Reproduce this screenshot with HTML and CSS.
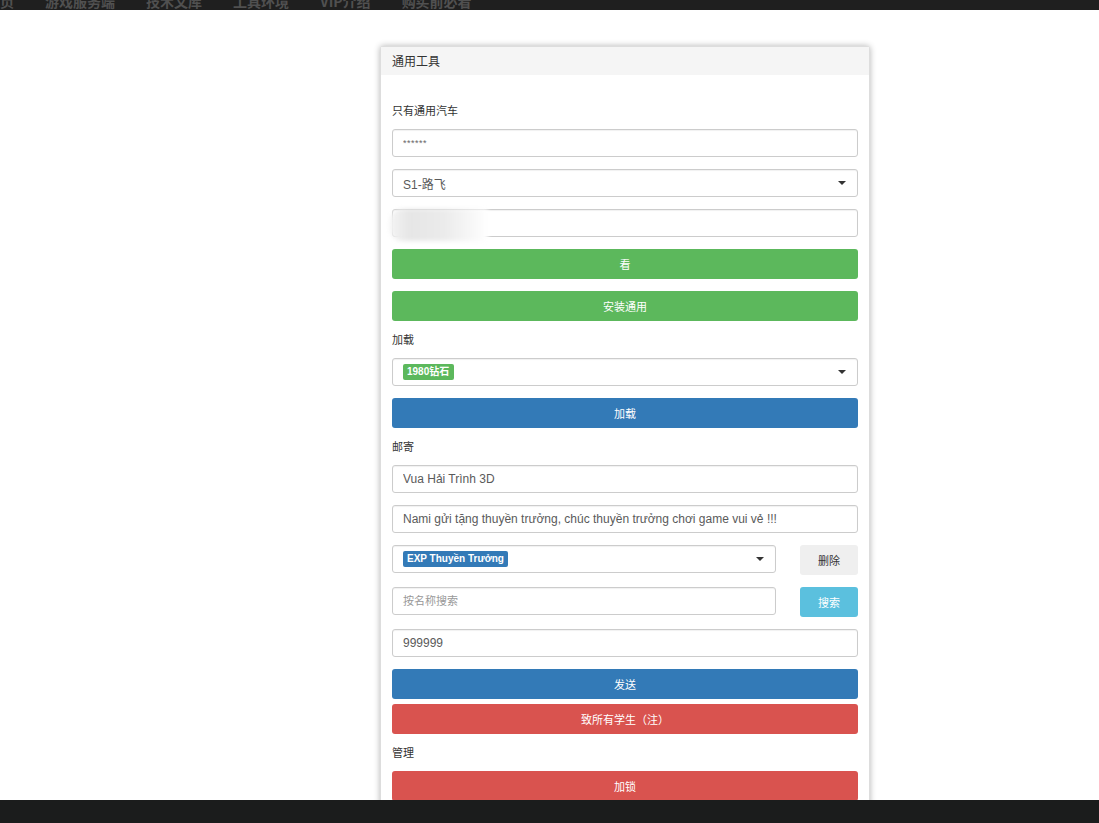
FILE: index.html
```html
<!DOCTYPE html>
<html lang="zh-CN">
<head>
    <meta charset="UTF-8">
    <meta name="viewport" content="width=device-width, initial-scale=1.0">
    <title>通用工具</title>
    <link rel="stylesheet" href="styles.css">
</head>
<body>
    <!-- Top nav (scrolled, only bottom edge visible) -->
    <div class="topbar">
        <ul class="nav">
            <li>首页</li>
            <li>游戏服务端</li>
            <li>技术文库</li>
            <li>工具环境</li>
            <li>VIP介绍</li>
            <li>购买前必看</li>
        </ul>
    </div>

    <div class="main">
        <div class="panel">
            <div class="panel-heading">通用工具</div>
            <div class="panel-body">
                <label class="field-label">只有通用汽车</label>
                <input type="text" class="form-control pw" value="******">
                <div class="form-control select-box">
                    <span>S1-路飞</span>
                    <span class="caret"></span>
                </div>
                <div class="form-control smudge-box">
                    <span class="smudge"></span>
                </div>
                <button class="btn btn-success">看</button>
                <button class="btn btn-success">安装通用</button>

                <label class="field-label">加载</label>
                <div class="form-control select-box">
                    <span class="tag tag-green">1980钻石</span>
                    <span class="caret"></span>
                </div>
                <button class="btn btn-primary">加载</button>

                <label class="field-label">邮寄</label>
                <input type="text" class="form-control" value="Vua Hải Trình 3D">
                <input type="text" class="form-control" value="Nami gửi tặng thuyền trưởng, chúc thuyền trưởng chơi game vui vẻ !!!">
                <div class="row">
                    <div class="form-control select-box">
                        <span class="tag tag-blue">EXP Thuyền Trưởng</span>
                        <span class="caret"></span>
                    </div>
                    <button class="btn btn-default btn-side">删除</button>
                </div>
                <div class="row">
                    <input type="text" class="form-control" placeholder="按名称搜索">
                    <button class="btn btn-info btn-side">搜索</button>
                </div>
                <input type="text" class="form-control" value="999999">
                <button class="btn btn-primary">发送</button>
                <button class="btn btn-danger btn-tight">致所有学生（注）</button>

                <label class="field-label">管理</label>
                <button class="btn btn-danger">加锁</button>
            </div>
        </div>
    </div>

    <div class="footer"></div>
</body>
</html>
```

FILE: styles.css
```css
* {
    box-sizing: border-box;
}

body {
    margin: 0;
    height: 100vh;
    display: flex;
    flex-direction: column;
    overflow: hidden;
    background: #fff;
    font-family: "Liberation Sans", "Noto Sans CJK SC", sans-serif;
    font-size: 12px;
    color: #333;
}

/* Top nav */
.topbar {
    height: 10px;
    flex: 0 0 10px;
    background: #1f1f1f;
    overflow: hidden;
}

.nav {
    list-style: none;
    margin: -9px 0 0 0;
    padding: 0;
    display: flex;
    gap: 31px;
    font-family: "Noto Sans CJK SC", sans-serif;
    font-size: 14px;
    font-weight: bold;
    line-height: 20px;
    color: #505050;
}

.nav li:first-child {
    margin-left: -14px;
}

/* Content */
.main {
    flex: 1;
    overflow: hidden;
    padding: 36px 0 0 380px;
}

.panel {
    width: 490px;
    border: 1px solid #ddd;
    border-radius: 3px;
    background: #fff;
    box-shadow: 0 0 6px rgba(0, 0, 0, 0.3);
}

.panel-heading {
    height: 28px;
    line-height: 28px;
    padding: 0 11px;
    background: #f5f5f5;
    font-family: "Noto Sans CJK SC", sans-serif;
    font-size: 12px;
    color: #333;
}

.panel-body {
    padding: 29px 11px 12px;
    display: flex;
    flex-direction: column;
    gap: 12px;
}

.field-label {
    display: block;
    margin-top: -1px;
    line-height: 14px;
    font-family: "Noto Sans CJK SC", sans-serif;
    font-size: 11px;
    color: #333;
}

.form-control {
    display: flex;
    align-items: center;
    width: 100%;
    height: 28px;
    padding: 0 10px;
    border: 1px solid #ccc;
    border-radius: 3px;
    background: #fff;
    box-shadow: inset 0 1px 1px rgba(0, 0, 0, 0.06);
    font-family: "Liberation Sans", "Noto Sans CJK SC", sans-serif;
    font-size: 12px;
    color: #5a5a5a;
    outline: none;
}

.form-control::placeholder {
    color: #999;
    font-family: "Noto Sans CJK SC", sans-serif;
    font-size: 11px;
}

.pw {
    font-size: 9px;
    color: #666;
    letter-spacing: 0.5px;
}

.select-box {
    justify-content: space-between;
    padding-right: 11px;
}

.caret {
    width: 0;
    height: 0;
    border-left: 4px solid transparent;
    border-right: 4px solid transparent;
    border-top: 4px solid #333;
}

.tag {
    display: inline-block;
    height: 16px;
    line-height: 16px;
    padding: 0 4px;
    border-radius: 2px;
    color: #fff;
    font-size: 10px;
    font-weight: bold;
}

.tag-green {
    background: #5cb85c;
    padding: 0 5px 0 4px;
}

.tag-blue {
    background: #337ab7;
}

/* blurred field */
.smudge-box {
    padding: 0;
    overflow: visible;
}

.smudge {
    display: block;
    width: 98px;
    height: 32px;
    margin: 4px 0 0 -3px;
    border-radius: 12px 0 0 12px;
    background: linear-gradient(90deg, #f4f4f4 0%, #e6e6e6 20%, #ebebeb 55%, #f6f6f6 80%, #fff 100%);
    filter: blur(2px);
}

/* Buttons */
.btn {
    display: block;
    width: 100%;
    height: 30px;
    border: none;
    border-radius: 3px;
    font-family: "Noto Sans CJK SC", sans-serif;
    font-size: 11px;
    color: #fff;
    cursor: pointer;
}

.btn-success {
    background-color: #5cb85c;
}

.btn-primary {
    background-color: #337ab7;
}

.btn-danger {
    background-color: #d9534f;
}

.btn-info {
    background-color: #5bc0de;
}

.btn-default {
    background-color: #efefef;
    color: #333;
}

.btn-tight {
    margin-top: -7px;
}

.row {
    display: flex;
    align-items: flex-start;
    gap: 24px;
}

.row .form-control {
    flex: 1;
}

.btn-side {
    flex: 0 0 58px;
    width: 58px;
}

.footer {
    flex: 0 0 23px;
    height: 23px;
    background: #1b1c1c;
}
```
